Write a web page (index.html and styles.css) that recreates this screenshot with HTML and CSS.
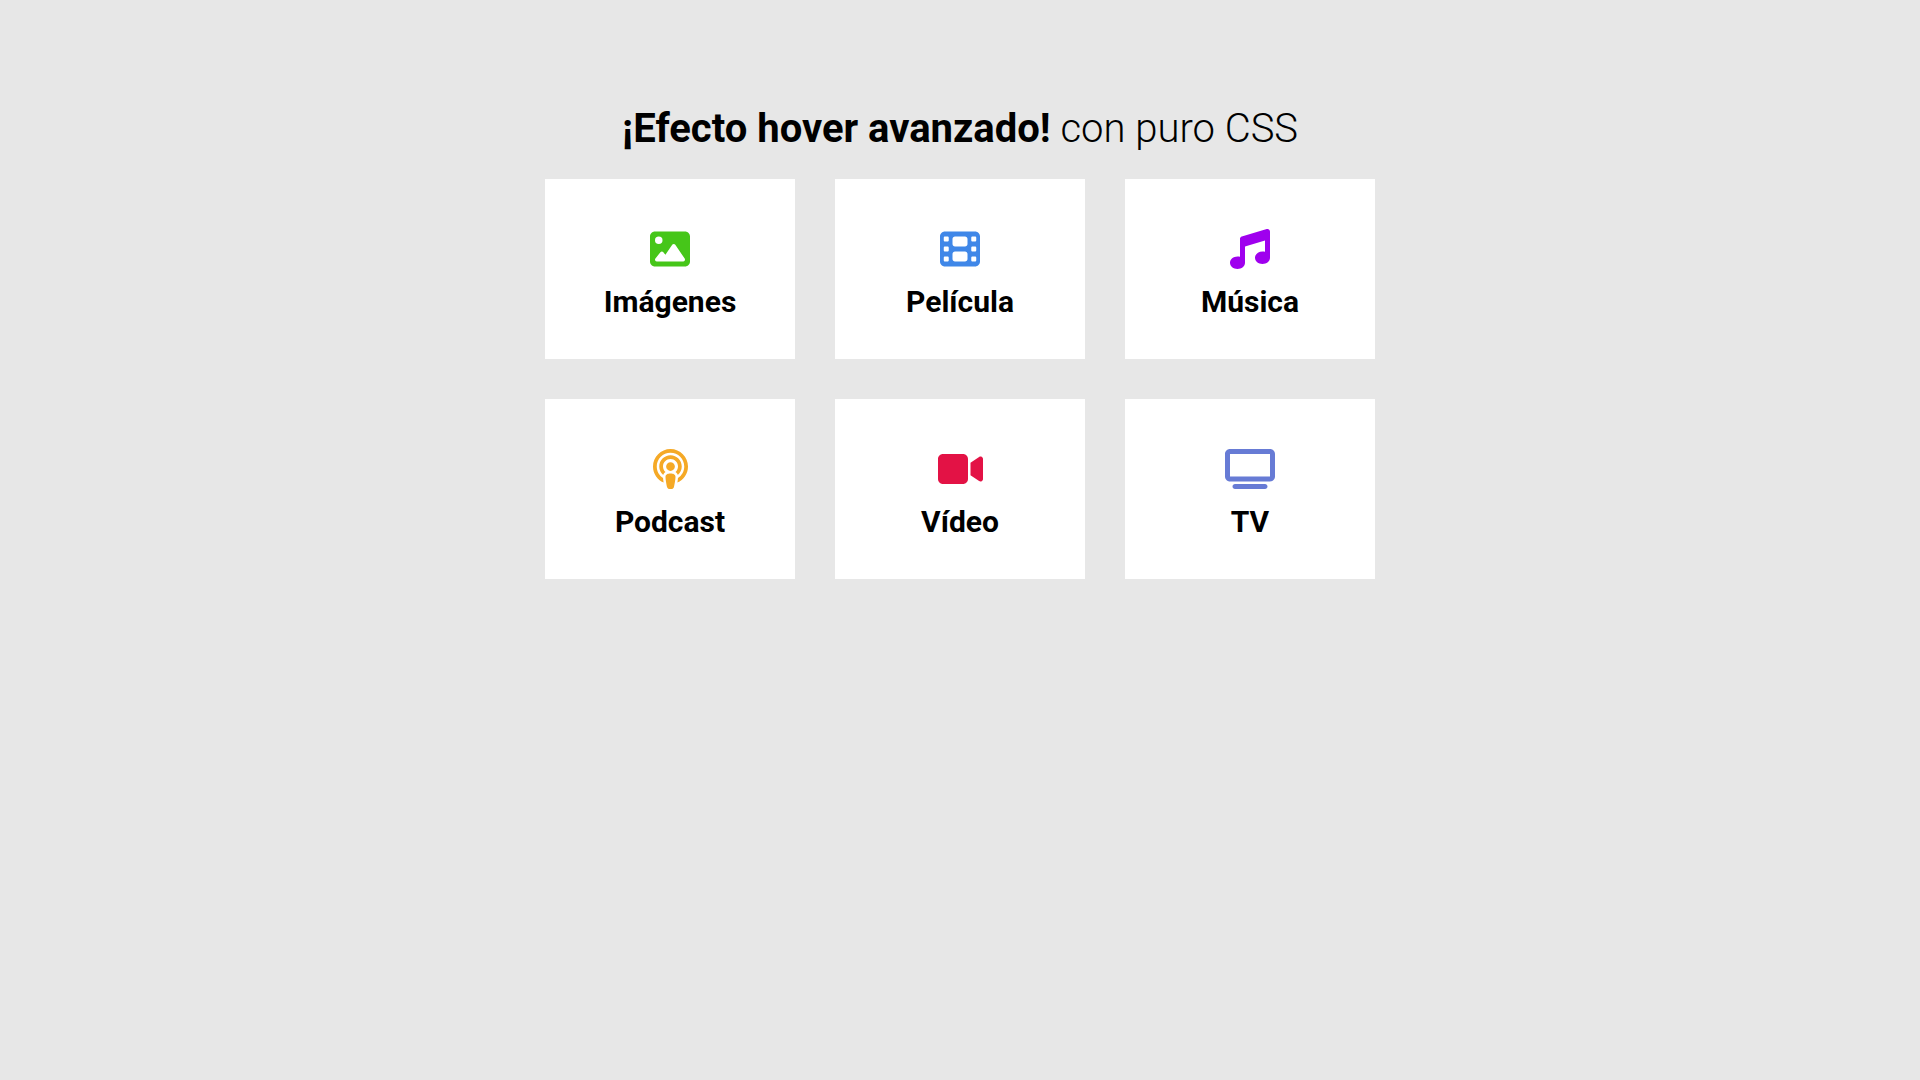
FILE: index.html
```html
<!DOCTYPE html>
<html lang="es">
<head>
<meta charset="utf-8">
<meta name="viewport" content="width=device-width, initial-scale=1">
<title>Efecto hover avanzado</title>
<link rel="stylesheet" href="styles.css">
</head>
<body>
<main class="page">
  <h1 class="title"><strong>¡Efecto hover avanzado!</strong> con puro CSS</h1>
  <div class="cards">
    <a class="card" href="#imagenes">
      <svg class="icon icon-image" viewBox="0 0 512 512" aria-hidden="true"><path d="M0 96C0 60.7 28.7 32 64 32H448c35.3 0 64 28.7 64 64V416c0 35.3-28.7 64-64 64H64c-35.3 0-64-28.7-64-64V96zM323.8 202.5c-4.500-6.600-11.900-10.500-19.800-10.500s-15.400 3.900-19.800 10.500l-87 127.600L170.700 297c-4.600-5.700-11.500-9-18.700-9s-14.200 3.300-18.700 9l-64 80c-5.800 7.200-6.900 17.100-2.900 25.400s12.400 13.600 21.600 13.600h96 32H424c8.900 0 17.100-4.900 21.200-12.800s3.600-17.400-1.400-24.700l-120-176zM112 192a48 48 0 1 0 0-96 48 48 0 1 0 0 96z"/></svg>
      <span class="name">Imágenes</span>
    </a>
    <a class="card" href="#pelicula">
      <svg class="icon icon-film" viewBox="0 0 512 512" aria-hidden="true"><path fill-rule="evenodd" d="M0 96C0 60.7 28.7 32 64 32H448c35.3 0 64 28.7 64 64V416c0 35.3-28.7 64-64 64H64c-35.3 0-64-28.7-64-64V96z
        M48 368v32c0 8.800 7.200 16 16 16H96c8.800 0 16-7.200 16-16V368c0-8.800-7.200-16-16-16H64c-8.800 0-16 7.200-16 16z
        M48 240v32c0 8.800 7.200 16 16 16H96c8.800 0 16-7.200 16-16V240c0-8.800-7.200-16-16-16H64c-8.800 0-16 7.200-16 16z
        M48 112v32c0 8.800 7.200 16 16 16H96c8.800 0 16-7.200 16-16V112c0-8.800-7.200-16-16-16H64c-8.800 0-16 7.200-16 16z
        M400 368v32c0 8.800 7.200 16 16 16h32c8.800 0 16-7.200 16-16V368c0-8.800-7.200-16-16-16H416c-8.800 0-16 7.200-16 16z
        M400 240v32c0 8.800 7.200 16 16 16h32c8.800 0 16-7.200 16-16V240c0-8.800-7.200-16-16-16H416c-8.800 0-16 7.200-16 16z
        M400 112v32c0 8.800 7.200 16 16 16h32c8.800 0 16-7.200 16-16V112c0-8.800-7.200-16-16-16H416c-8.800 0-16 7.200-16 16z
        M160 128v64c0 17.700 14.300 32 32 32H320c17.700 0 32-14.300 32-32V128c0-17.700-14.300-32-32-32H192c-17.700 0-32 14.300-32 32z
        M160 320v64c0 17.700 14.300 32 32 32H320c17.700 0 32-14.300 32-32V320c0-17.700-14.300-32-32-32H192c-17.700 0-32 14.300-32 32z"/></svg>
      <span class="name">Película</span>
    </a>
    <a class="card" href="#musica">
      <svg class="icon icon-music" viewBox="0 0 512 512" aria-hidden="true"><path d="M499.1 6.3c8.1 6 12.9 15.6 12.9 25.7v72V368c0 44.2-43 80-96 80s-96-35.8-96-80s43-80 96-80c11.2 0 22 1.6 32 4.6V147L192 223.8V432c0 44.2-43 80-96 80s-96-35.8-96-80s43-80 96-80c11.2 0 22 1.6 32 4.6V200 128c0-14.1 9.3-26.6 22.8-30.7l320-96c9.700-2.900 20.200-1.100 28.300 5z"/></svg>
      <span class="name">Música</span>
    </a>
    <a class="card" href="#podcast">
      <svg class="icon icon-podcast" viewBox="0 0 448 512" aria-hidden="true"><path d="M319.4 372c48.5-31.3 80.6-85.9 80.6-148c0-97.2-78.8-176-176-176S48 126.8 48 224c0 62.1 32.1 116.6 80.6 148c1.2 17.3 4 38 7.2 57.1l.2 1C56 395.8 0 316.5 0 224C0 100.3 100.3 0 224 0S448 100.3 448 224c0 92.5-56 171.9-136 206.1l.2-1.1c3.1-19.2 6-39.8 7.2-57zm-2.3-38.1c-1.6-5.7-3.9-11.1-7-16.2c-5.8-9.7-13.5-17-21.9-22.4c19.5-17.6 31.8-43 31.8-71.3c0-53-43-96-96-96s-96 43-96 96c0 28.3 12.3 53.8 31.8 71.3c-8.4 5.4-16.1 12.7-21.9 22.4c-3.1 5.1-5.4 10.5-7 16.2C99.8 307.5 80 268 80 224c0-79.5 64.5-144 144-144s144 64.5 144 144c0 44-19.8 83.5-50.9 109.9zM224 312c32.9 0 64 8.6 64 43.8c0 33-12.9 104.1-20.6 132.9c-5.1 19-24.5 23.4-43.4 23.4s-38.2-4.4-43.4-23.4c-7.8-28.5-20.6-99.7-20.6-132.8c0-35.1 31.1-43.8 64-43.8zm0-144a56 56 0 1 1 0 112 56 56 0 1 1 0-112z"/></svg>
      <span class="name">Podcast</span>
    </a>
    <a class="card" href="#video">
      <svg class="icon icon-video" viewBox="0 0 576 512" aria-hidden="true"><path d="M0 128C0 92.7 28.7 64 64 64H320c35.3 0 64 28.7 64 64V384c0 35.3-28.7 64-64 64H64c-35.3 0-64-28.7-64-64V128zM559.1 99.8c10.4 5.6 16.9 16.4 16.9 28.2V384c0 11.8-6.5 22.6-16.9 28.2s-23 5-32.9-1.6l-96-64L416 337.1V320 192 174.9l14.2-9.5 96-64c9.8-6.5 22.4-7.2 32.9-1.600z"/></svg>
      <span class="name">Vídeo</span>
    </a>
    <a class="card" href="#tv">
      <svg class="icon icon-tv" viewBox="0 0 640 512" aria-hidden="true"><path fill-rule="evenodd" d="M64 64V352H576V64H64zM0 64C0 28.7 28.7 0 64 0H576c35.3 0 64 28.7 64 64V352c0 35.3-28.7 64-64 64H64c-35.3 0-64-28.7-64-64V64zM128 448H512c17.7 0 32 14.3 32 32s-14.3 32-32 32H128c-17.7 0-32-14.3-32-32s14.3-32 32-32z"/></svg>
      <span class="name">TV</span>
    </a>
  </div>
</main>
</body>
</html>
```

FILE: styles.css
```css
* {
  box-sizing: border-box;
}

body {
  margin: 0;
  background: #e7e7e7;
  color: #000;
  font-family: Roboto, sans-serif;
}

.page {
  max-width: 870px;
  margin: 0 auto;
  padding: 105px 20px 40px;
}

.title {
  margin: 0 0 27px;
  font-size: 40px;
  line-height: 47px;
  font-weight: 300;
  text-align: center;
}

.title strong {
  font-weight: 700;
}

.cards {
  display: grid;
  grid-template-columns: repeat(auto-fit, minmax(250px, 1fr));
  gap: 40px;
}

.card {
  display: flex;
  flex-direction: column;
  align-items: center;
  gap: 15px;
  min-height: 180px;
  padding: 50px 20px 40px;
  background: #fff;
  color: inherit;
  text-decoration: none;
  transition: box-shadow 0.3s;
}

.card:hover {
  box-shadow: 0 8px 20px rgba(0, 0, 0, 0.2);
}

.icon {
  height: 40px;
  fill: currentColor;
}

.icon-image { color: #46c619; }
.icon-film { color: #3f87e8; }
.icon-music { color: #9f00ee; }
.icon-podcast { color: #f5a926; }
.icon-video { color: #e31245; }
.icon-tv { color: #677bd5; }

.name {
  font-size: 30px;
  line-height: 35px;
  font-weight: 700;
}
```
